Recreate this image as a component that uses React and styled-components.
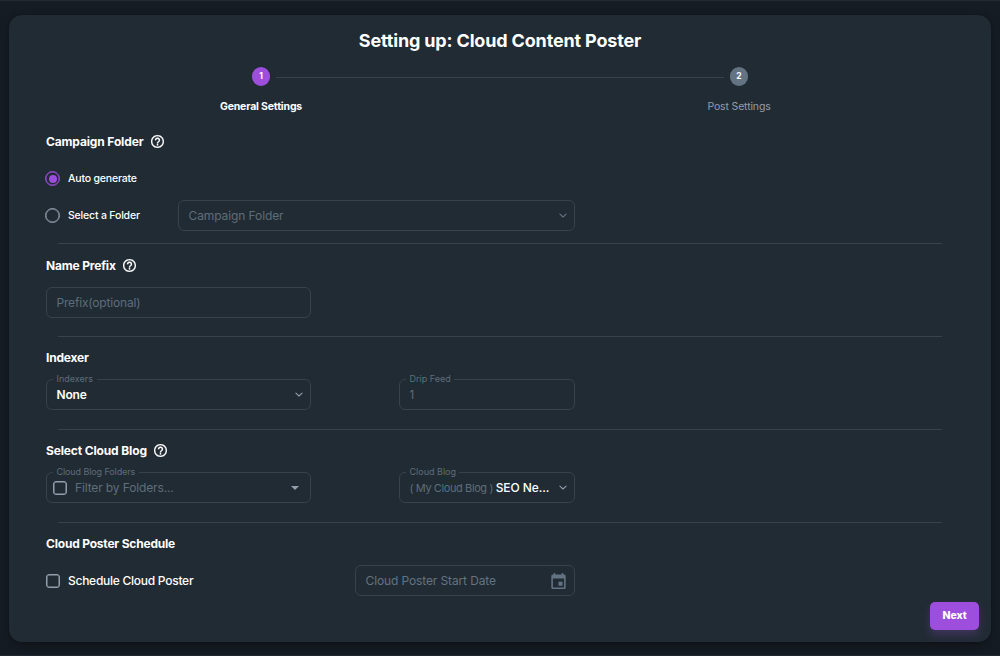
import React from "react";
import styled, { createGlobalStyle, css } from "styled-components";

const c = {
  page: "#161c24",
  card: "#212b34",
  line: "#37424c",
  muted: "#5f6d79",
  soft: "#919eab",
  purple: "#9d4edd",
};

const Global = createGlobalStyle`
  *, *::before, *::after { box-sizing: border-box; }
  body {
    margin: 0;
    background: ${c.page};
    color: #fff;
    font-family: Inter, "Liberation Sans", sans-serif;
  }
`;

const Page = styled.div`
  height: 656px;
  padding: 14px 9px 0;
  border-top: 1px solid #212b34;
  border-bottom: 1px solid #212832;
  overflow: hidden;
`;

const Card = styled.main`
  height: 627px;
  width: 982px;
  padding: 0 37px;
  border-radius: 13px;
  background: ${c.card};
  box-shadow: 0 0 3px rgba(0, 0, 0, 0.3), 0 8px 16px -2px rgba(0, 0, 0, 0.25);
  display: flex;
  flex-direction: column;
`;

const Label = styled.span`
  white-space: nowrap;
  font-size: ${(p) => p.$size || 11.5}px;
  font-weight: ${(p) => p.$weight || 400};
  letter-spacing: ${(p) => p.$track || 0}px;
  color: ${(p) => p.$color || "#fff"};
`;

const Title = styled.h1`
  margin: 0;
  height: 51px;
  line-height: 51px;
  text-align: center;
  font-size: 18px;
  font-weight: 700;
  letter-spacing: -0.16px;
`;

const Stepper = styled.div`
  display: flex;
  justify-content: center;
  align-items: flex-start;
  height: 65px;
  padding-top: 1px;
`;

const Step = styled.div`
  width: 18px;
  display: flex;
  flex-direction: column;
  align-items: center;
  gap: 13px;
  line-height: 16px;
`;

const StepDot = styled.div`
  width: 18.5px;
  height: 18.5px;
  flex: none;
  border-radius: 50%;
  background: ${(p) => (p.$active ? c.purple : "#637381")};
  font-size: 8.5px;
  font-weight: 700;
  line-height: 19px;
  text-align: center;
`;

const StepLine = styled.div`
  width: 448px;
  height: 1px;
  margin: 10px 6px 0;
  background: ${c.line};
`;

const Section = styled.section`
  height: ${(p) => p.$height || 93}px;
  display: flex;
  flex-direction: column;
`;

const Heading = styled.h2`
  margin: 0;
  height: ${(p) => p.$height}px;
  padding-top: ${(p) => p.$top || 0}px;
  display: flex;
  align-items: flex-start;
  gap: 7.5px;
  line-height: 16px;

  svg { margin-top: 1px; }
`;

const Divider = styled.hr`
  width: 884px;
  height: 1px;
  margin: auto 12px 0;
  border: 0;
  background: ${c.line};
`;

const Row = styled.div`
  height: ${(p) => p.$height || 31}px;
  display: flex;
  align-items: center;
`;

const Choice = styled.label`
  width: ${(p) => p.$width || 132}px;
  display: flex;
  align-items: center;
  gap: 8px;
`;

const Radio = styled.span`
  width: 15px;
  height: 15px;
  margin-left: -1px;
  border: 1.5px solid ${(p) => (p.$checked ? c.purple : c.soft)};
  box-shadow: inset 0 0 0 0.5px ${(p) => (p.$checked ? c.purple : c.soft)};
  border-radius: 50%;
  display: grid;
  place-items: center;

  ${(p) =>
    p.$checked &&
    css`
      &::after {
        content: "";
        width: 8px;
        height: 8px;
        border-radius: 50%;
        background: ${c.purple};
      }
    `}
`;

const Checkbox = styled.span`
  width: 14px;
  height: 14px;
  flex: none;
  border: 1.5px solid ${c.soft};
  box-shadow: inset 0 0 0 0.5px ${c.soft};
  border-radius: 3px;
`;

const Field = styled.div`
  position: relative;
  width: ${(p) => p.$width}px;
  height: 31px;
  margin-left: ${(p) => p.$left || 0}px;
  padding: 0 ${(p) => p.$end || 7}px 0 ${(p) => p.$start || 9.5}px;
  border: 1px solid ${c.line};
  border-radius: 6px;
  display: flex;
  align-items: center;

  > svg { margin-left: auto; flex: none; }
`;

const Notch = styled.span`
  position: absolute;
  top: -8px;
  left: 6px;
  width: ${(p) => p.$width}px;
  height: 14px;
  padding-left: 3.5px;
  line-height: 14px;
  background: ${c.card};
  color: ${c.muted};
  font-size: 9px;
  letter-spacing: ${(p) => p.$track || 0}px;
  white-space: nowrap;
`;

const Footer = styled.footer`
  margin-top: auto;
  margin-right: -25px;
  padding-bottom: 12px;
  display: flex;
  justify-content: flex-end;
`;

const NextButton = styled.button`
  width: 49px;
  height: 28px;
  padding: 0 0 1px;
  border: 0;
  border-radius: 5px;
  background: ${c.purple};
  box-shadow: 0 5px 10px rgba(157, 78, 221, 0.24);
  color: #fff;
  font: 800 10.5px Inter, sans-serif;
  letter-spacing: -0.1px;
`;

const Help = () => (
  <svg width="13" height="13" viewBox="2 2 20 20" fill="#fff" stroke="#fff" strokeWidth="0.3">
    <path d="M11 18h2v-2h-2v2zm1-16C6.48 2 2 6.48 2 12s4.48 10 10 10 10-4.48 10-10S17.52 2 12 2zm0 18c-4.41 0-8-3.59-8-8s3.59-8 8-8 8 3.59 8 8-3.59 8-8 8zm0-14c-2.21 0-4 1.79-4 4h2c0-1.1.9-2 2-2s2 .9 2 2c0 2-3 1.75-3 5h2c0-2.25 3-2.5 3-5 0-2.21-1.79-4-4-4z" />
  </svg>
);

const Chevron = ({ color = c.soft }) => (
  <svg width="8" height="5" viewBox="0 0 8 5" fill="none" stroke={color} strokeWidth="1.1" strokeLinecap="round" strokeLinejoin="round">
    <path d="M.9 1.2 4 4 7.1 1.2" />
  </svg>
);

const Triangle = () => (
  <svg width="8" height="4" viewBox="0 0 8 4" fill={c.soft}>
    <path d="M0 0h8L4 4z" />
  </svg>
);

const Calendar = () => (
  <svg width="15" height="16" viewBox="3 1 18 20" fill="#637381">
    <path fillRule="evenodd" d="M19 3h-1V1h-2v2H8V1H6v2H5c-1.1 0-2 .9-2 2v14c0 1.1.9 2 2 2h14c1.1 0 2-.9 2-2V5c0-1.1-.9-2-2-2zm0 16H5V8h14v11zM12 12h5v5h-5z" />
  </svg>
);

const HeadText = ({ children, track }) => (
  <Label $size={12} $weight={700} $track={track}>{children}</Label>
);

export default function App() {
  return (
    <>
      <Global />
      <Page>
        <Card>
          <Title>Setting up: Cloud Content Poster</Title>
          <Stepper>
            <Step>
              <StepDot $active>1</StepDot>
              <Label $size={10.5} $weight={700} $track={-0.17}>General Settings</Label>
            </Step>
            <StepLine />
            <Step>
              <StepDot>2</StepDot>
              <Label $size={10.5} $track={-0.15} $color={c.soft}>Post Settings</Label>
            </Step>
          </Stepper>

          <Section $height={113}>
            <Heading $height={29} $top={3}>
              <HeadText track={-0.14}>Campaign Folder</HeadText>
              <Help />
            </Heading>
            <Row $height={37}>
              <Choice>
                <Radio $checked />
                <Label $size={10.5} $weight={500} $track={-0.18}>Auto generate</Label>
              </Choice>
            </Row>
            <Row $height={37}>
              <Choice>
                <Radio />
                <Label $size={10.5} $weight={500} $track={-0.18}>Select a Folder</Label>
              </Choice>
              <Field $width={397}>
                <Label $size={12} $track={-0.1} $color={c.muted}>Campaign Folder</Label>
                <Chevron color="#637381" />
              </Field>
            </Row>
            <Divider />
          </Section>

          <Section>
            <Heading $height={43} $top={14}>
              <HeadText track={-0.18}>Name Prefix</HeadText>
              <Help />
            </Heading>
            <Row>
              <Field $width={265}>
                <Label $size={12} $track={-0.18} $color={c.muted}>Prefix(optional)</Label>
              </Field>
            </Row>
            <Divider />
          </Section>

          <Section>
            <Heading $height={42} $top={13}>
              <HeadText track={-0.2}>Indexer</HeadText>
            </Heading>
            <Row>
              <Field $width={265}>
                <Notch $width={44}>Indexers</Notch>
                <Label $size={12} $weight={600} $track={-0.2}>None</Label>
                <Chevron />
              </Field>
              <Field $width={176} $left={88}>
                <Notch $width={48}>Drip Feed</Notch>
                <Label $size={11.5} $color={c.muted}>1</Label>
              </Field>
            </Row>
            <Divider />
          </Section>

          <Section>
            <Heading $height={42} $top={13}>
              <HeadText track={-0.14}>Select Cloud Blog</HeadText>
              <Help />
            </Heading>
            <Row>
              <Field $width={265} $start={6} $end={11}>
                <Notch $width={86} $track={-0.1}>Cloud Blog Folders</Notch>
                <Choice>
                  <Checkbox />
                  <Label $size={12} $track={-0.13} $color={c.muted}>Filter by Folders...</Label>
                </Choice>
                <Triangle />
              </Field>
              <Field $width={176} $left={88}>
                <Notch $width={53}>Cloud Blog</Notch>
                <Label $size={11} $track={-0.4} $color={c.muted}>( My Cloud Blog )&nbsp;</Label>
                <Label $size={12} $weight={500} $track={-0.1}>SEO Ne...</Label>
                <Chevron />
              </Field>
            </Row>
            <Divider />
          </Section>

          <Section $height={75}>
            <Heading $height={42} $top={13}>
              <HeadText track={-0.2}>Cloud Poster Schedule</HeadText>
            </Heading>
            <Row>
              <Choice $width={309}>
                <Checkbox />
                <Label $size={12} $weight={500} $track={-0.26}>Schedule Cloud Poster</Label>
              </Choice>
              <Field $width={220} $end={8}>
                <Label $size={12} $track={-0.12} $color="#637381">Cloud Poster Start Date</Label>
                <Calendar />
              </Field>
            </Row>
          </Section>

          <Footer>
            <NextButton>Next</NextButton>
          </Footer>
        </Card>
      </Page>
    </>
  );
}
